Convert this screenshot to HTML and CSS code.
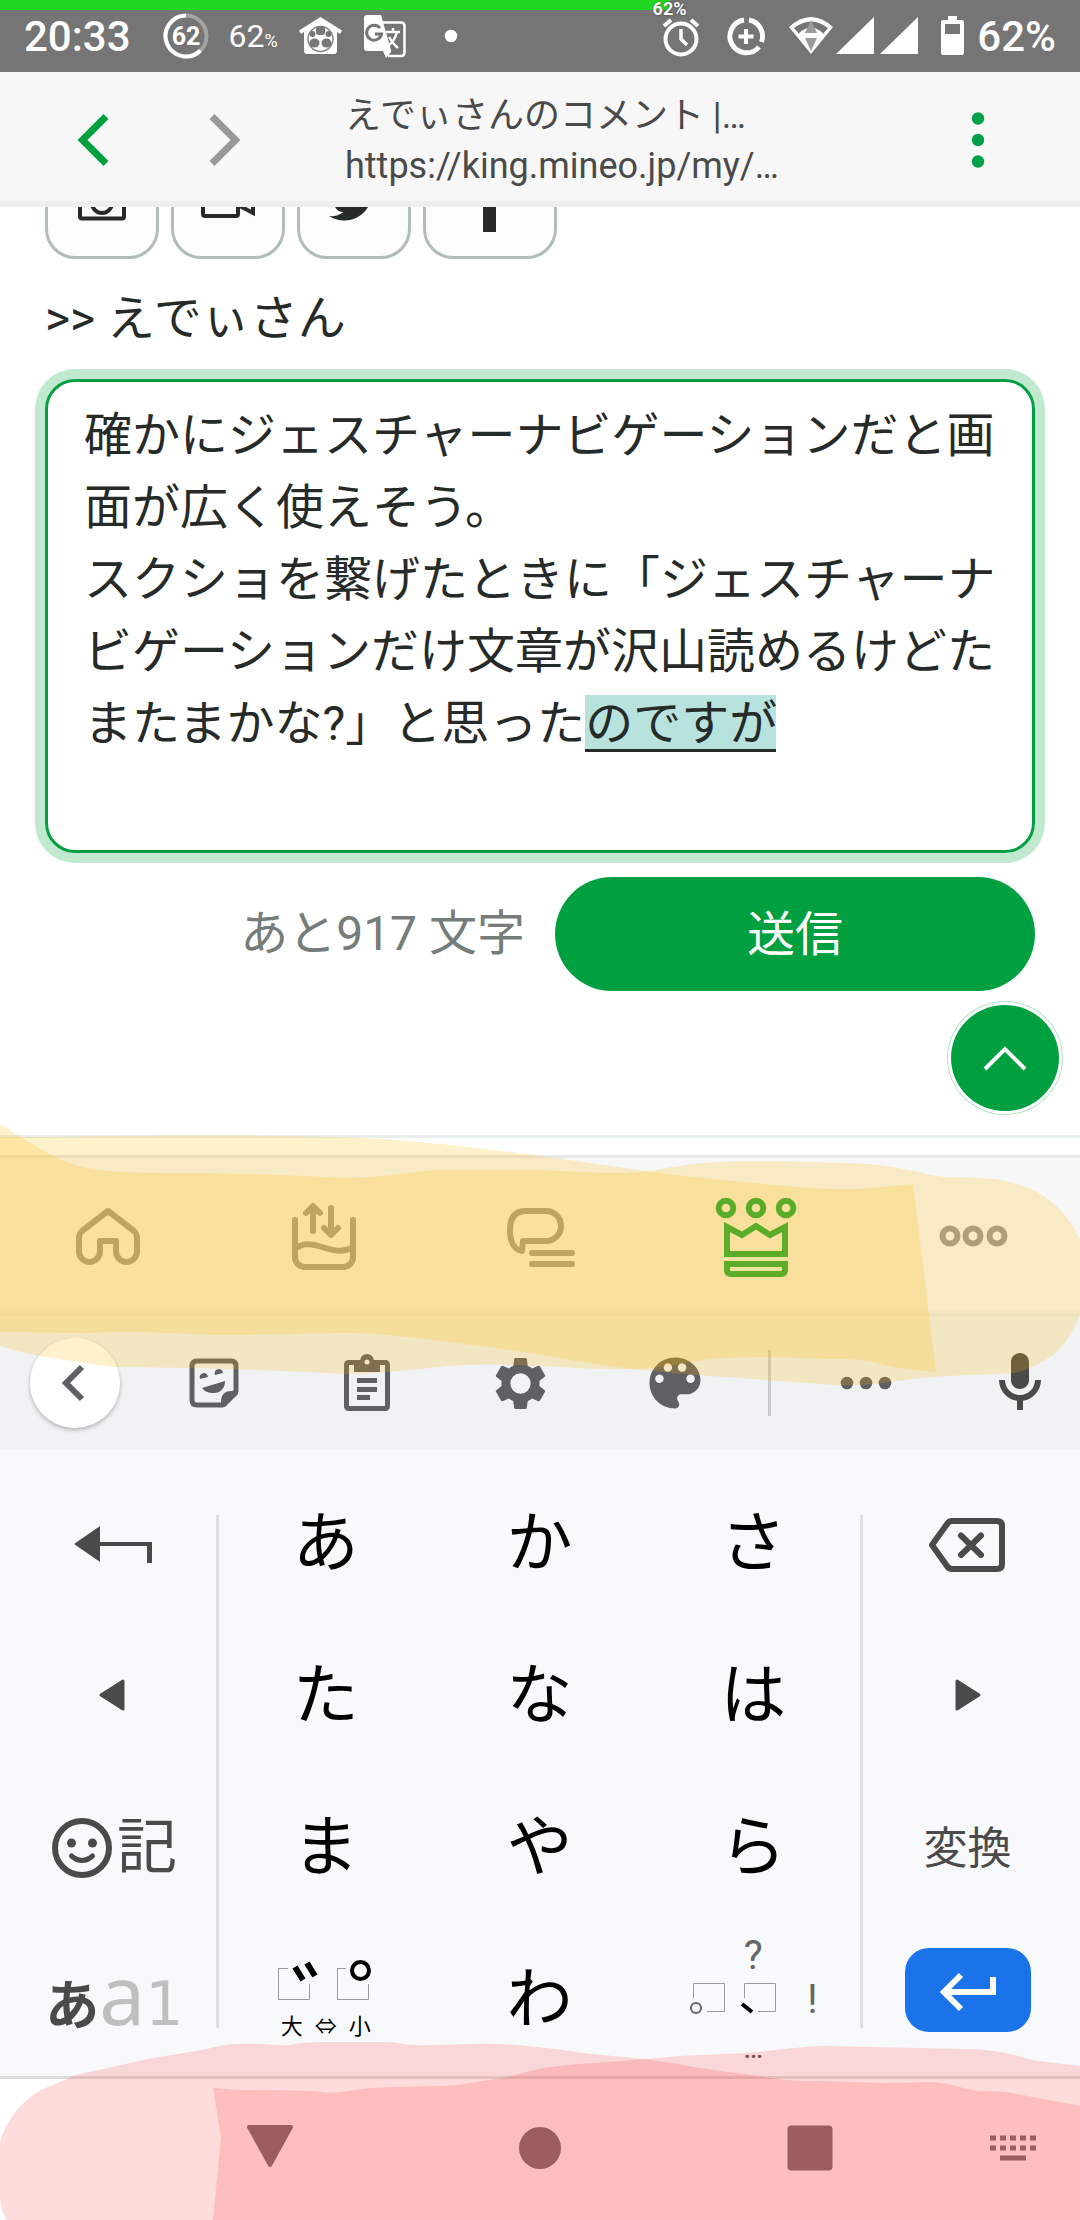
FILE: index.html
```html
<!DOCTYPE html>
<html lang="ja">
<head>
<meta charset="utf-8">
<meta name="viewport" content="width=device-width, initial-scale=1">
<title>えでぃさんのコメント</title>
<link rel="stylesheet" href="styles.css">
</head>
<body>
<header class="status">
  <div class="battery-line" style="width:62%"></div>
  <span class="battery-tag">62%</span>
  <div class="status-group">
    <span class="clock">20:33</span>
    <svg class="ring" width="46" height="46" viewBox="0 0 46 46" fill="none" stroke-width="4"><circle cx="23" cy="23" r="20.500" stroke="#a3a3a3"/><path d="M23 2.500A20.500 20.500 0 1 0 37.500 37.500" stroke="#fff"/><text x="23" y="32" class="ring-text">62</text></svg>
    <span class="narrow">62<small>%</small></span>
    <svg width="45" height="42" viewBox="0 0 45 42"><path d="M22.500 2 44 15.500 42 19 39 17V36Q39 39 36 39H9Q6 39 6 36V17L3 19 1 15.500Z" fill="#fff"/><circle cx="22.500" cy="24" r="12.500" fill="none" stroke="#858585" stroke-width="1.500"/><g fill="#777"><rect x="18" y="11" width="9" height="9" rx="3"/><circle cx="14.500" cy="19" r="3"/><circle cx="30.500" cy="19" r="3"/><ellipse cx="16.500" cy="28" rx="5" ry="4.500"/><ellipse cx="28.500" cy="28" rx="5" ry="4.500"/></g></svg>
    <svg width="45" height="45" viewBox="0 0 45 45"><path d="M18 8.500H38Q41.500 8.500 41.500 12V38Q41.500 42 38 42H25" fill="none" stroke="#fff" stroke-width="2.500"/><path d="M4 1H18L28 36V38L23 44 20 37H4Q1 37 1 34V4Q1 1 4 1Z" fill="#fff"/><path d="M17 14A7.500 7.500 0 1 0 18.500 20H12" fill="none" stroke="#757575" stroke-width="3"/><path d="M23 18H37M30 14V18M34 18Q31 29 24 32M26 23Q30 30 35 34" fill="none" stroke="#fff" stroke-width="2.500"/></svg>
    <svg class="notice-dot" width="14" height="14" viewBox="0 0 14 14"><circle cx="7" cy="7" r="6.200" fill="#fff"/></svg>
  </div>
  <div class="status-group tight">
    <svg width="48" height="48" viewBox="0 0 48 48" fill="none" stroke="#fff" stroke-width="4"><circle cx="24" cy="27" r="15.500"/><path d="M24 17V27L30 33" stroke-width="3.500"/><path d="M7 14 14 8M34 8 41 14"/></svg>
    <svg class="saver" width="48" height="48" viewBox="0 0 48 48" fill="none" stroke="#fff" stroke-width="5"><path d="M22 8A16.500 16.500 0 1 0 37 35"/><path d="M27 8A16.500 16.500 0 0 1 39.500 30"/><path d="M24 17V32M16.500 24.500H31.500" stroke-width="4"/></svg>
    <svg width="48" height="48" viewBox="0 0 48 48"><path d="M2 15Q24-5 46 15L24 42Z" fill="#fff"/><path d="M7 16Q24 3 41 16L36 22Q24 9 12 22Z" fill="#757575"/><path d="M12 21Q24 11 36 21L33 25H15Z" fill="#fff"/><path d="M24 8 30 21H18ZM18 26H30L24 39Z" fill="#9a9a9a"/></svg>
    <svg width="44" height="44" viewBox="0 0 44 44"><path d="M1 40H39V3Z" fill="#fff"/></svg>
    <svg width="44" height="44" viewBox="0 0 44 44"><path d="M1 40H39V3Z" fill="#fff"/></svg>
    <svg class="cell" width="24" height="42" viewBox="0 0 24 42"><path d="M7 1H16V5H21Q23 5 23 7V38Q23 40 21 40H2Q0 40 0 38V7Q0 5 2 5H7Z" fill="#fff"/><path d="M4 9H19V19H4Z" fill="#757575"/></svg>
    <span class="percent">62%</span>
  </div>
</header>

<nav class="browser">
  <button class="plain nav-btn" aria-label="戻る"><svg width="36" height="56" viewBox="0 0 36 56"><path d="M31 4.500 7.500 28 31 51.500" fill="none" stroke="#00a040" stroke-width="7"/></svg></button>
  <button class="plain nav-btn" aria-label="進む"><svg width="36" height="56" viewBox="0 0 36 56"><path d="M5 4.500 28.500 28 5 51.500" fill="none" stroke="#999" stroke-width="7"/></svg></button>
  <div class="address"><span>えでぃさんのコメント |…</span><span>https://king.mineo.jp/my/…</span></div>
  <button class="plain menu-btn" aria-label="メニュー"><svg width="20" height="60" viewBox="0 0 20 60" fill="#00a04a"><circle cx="10" cy="8.500" r="6.200"/><circle cx="10" cy="30" r="6.200"/><circle cx="10" cy="51.500" r="6.200"/></svg></button>
</nav>

<main class="content">
  <div class="share">
    <button class="share-btn" aria-label="写真"><svg width="60" height="60" viewBox="0 0 60 60" fill="none" stroke="#262a28" stroke-width="4"><rect x="8" y="13" width="44" height="33.500" rx="2"/><circle cx="30" cy="31" r="10"/></svg></button>
    <button class="share-btn" aria-label="動画"><svg width="60" height="60" viewBox="0 0 60 60" fill="none" stroke="#262a28" stroke-width="4"><rect x="5" y="13" width="35" height="31" rx="2"/><path d="M40 25 55 16V41L40 33"/></svg></button>
    <button class="share-btn" aria-label="Twitter"><svg width="60" height="60" viewBox="0 0 60 60"><path transform="translate(5 5) scale(2)" fill="#262a28" d="M23.953 4.570a10 10 0 01-2.825.775 4.958 4.958 0 002.163-2.723c-.951.555-2.005.959-3.127 1.184a4.920 4.920 0 00-8.384 4.482C7.690 8.095 4.067 6.130 1.640 3.162a4.822 4.822 0 00-.666 2.475c0 1.710.870 3.213 2.188 4.096a4.904 4.904 0 01-2.228-.616v.060a4.923 4.923 0 003.946 4.827 4.996 4.996 0 01-2.212.085 4.936 4.936 0 004.604 3.417 9.867 9.867 0 01-6.102 2.105c-.390 0-.779-.023-1.170-.067a13.995 13.995 0 007.557 2.209c9.053 0 13.998-7.496 13.998-13.985 0-.210 0-.420-.015-.630A9.935 9.935 0 0024 4.590z"/></svg></button>
    <button class="share-btn wide" aria-label="Facebook"><svg width="60" height="60" viewBox="0 0 60 60"><path d="M23 60V33H15V22H23V14Q23 2 36 2H44V13H39Q36 13 36 17V22H44L43 33H36V60Z" fill="#262a28"/></svg></button>
  </div>
  <label class="reply-to" for="comment">&gt;&gt; えでぃさん</label>
  <div class="editor">
    <span class="composing"></span>
    <textarea id="comment" class="comment" rows="6" spellcheck="false">確かにジェスチャーナビゲーションだと画面が広く使えそう。
スクショを繋げたときに「ジェスチャーナビゲーションだけ文章が沢山読めるけどたまたまかな?」と思ったのですが</textarea>
  </div>
  <div class="submit-row">
    <span class="remaining">あと917 文字</span>
    <button class="send">送信</button>
  </div>
  <a class="to-top" href="#" aria-label="ページの先頭へ"><svg width="50" height="32" viewBox="0 0 50 32"><path d="M5 27 25 7 45 27" fill="none" stroke="#fff" stroke-width="4"/></svg></a>
</main>

<div class="lower">
  <nav class="tabs">
    <a href="#" aria-label="ホーム"><svg width="72" height="72" viewBox="0 0 72 72"><path d="M36 11 10 31Q7 34 7 37V51A10.500 11 0 0 0 28 51V41H44V51A10.500 11 0 0 0 65 51V37Q65 34 62 31Z"/></svg></a>
    <a href="#" aria-label="パケット"><svg width="72" height="72" viewBox="0 0 72 72"><path d="M7 20V57A10 10 0 0 0 17 67H55A10 10 0 0 0 65 57V20M7 49C14 43 22 43 34 47S55 53 65 47M25 31V7M18 13 25 6 32 13M43 8V33M36 28 43 35 50 28"/></svg></a>
    <a href="#" aria-label="掲示板"><svg width="72" height="72" viewBox="0 0 72 72"><path d="M19 41H42A15 15 0 0 0 42 11H22Q6 11 6 30C6 43 11 50 18 51Z M28 53H68M28 64H68"/></svg></a>
    <a href="#" class="active" aria-label="マイネ王"><svg width="84" height="84" viewBox="0 0 84 84"><circle cx="12" cy="14" r="7.300"/><circle cx="42" cy="14" r="7.300"/><circle cx="72" cy="14" r="7.300"/><path class="sharp" d="M13 33 28 41 42 32 56 41 71 33V60H13Z"/><path class="sharp" d="M13 70H71V76Q71 80 67 80H17Q13 80 13 76Z"/></svg></a>
    <a href="#" aria-label="その他"><svg width="72" height="72" viewBox="0 0 72 72"><circle cx="14" cy="36" r="7.500"/><circle cx="37" cy="36" r="7.500"/><circle cx="61" cy="36" r="7.500"/></svg></a>
  </nav>

  <div class="tools">
    <button class="plain" aria-label="閉じる"><span class="disc"><svg width="40" height="40" viewBox="0 0 40 40"><path d="M27 4 11 20 27 36" fill="none" stroke="#5f6063" stroke-width="6"/></svg></span></button>
    <button class="plain" aria-label="ステッカー"><svg width="60" height="60" viewBox="0 0 60 60"><path d="M13 8H47Q52 8 52 13V38L38 52H13Q8 52 8 47V13Q8 8 13 8Z" fill="none" stroke="#5f6063" stroke-width="5"/><path d="M54 37V41L41 54H37V47Q38 38 47 38H54Z" fill="#5f6063"/><path d="M16 26A4.200 4.200 0 1 1 24 24ZM31 22A4.200 4.200 0 1 1 39 20ZM18 35 41 28C41 36 36 40 30 40 24 40 20 38 18 35Z" fill="#5f6063"/></svg></button>
    <button class="plain" aria-label="クリップボード"><svg width="60" height="60" viewBox="0 0 60 60"><path fill="none" stroke="#5f6063" stroke-width="5" d="M12 9.500H48Q50.500 9.500 50.500 12V53Q50.500 55.500 48 55.500H12Q9.500 55.500 9.500 53V12Q9.500 9.500 12 9.500Z"/><path fill="#5f6063" d="M17 8H23A7 7 0 0 1 37 8H43V19H17ZM20 25H40V30H20ZM20 34H40V39H20ZM20 42H33V47H20Z"/><circle cx="30" cy="9" r="2.500" fill="#f1f2f4"/></svg></button>
    <button class="plain" aria-label="設定"><svg width="61" height="61" viewBox="0 0 24 24"><path fill="#5f6063" d="M19.430 12.980c.040-.320.070-.640.070-.980s-.030-.660-.070-.980l2.110-1.650c.190-.150.240-.420.120-.640l-2-3.460c-.120-.220-.390-.300-.610-.220l-2.490 1c-.520-.400-1.080-.730-1.690-.980l-.380-2.650C14.460 2.180 14.250 2 14 2h-4c-.250 0-.460.180-.490.420l-.380 2.650c-.610.250-1.170.590-1.690.980l-2.490-1c-.230-.090-.490 0-.610.220l-2 3.460c-.130.220-.070.490.120.640l2.110 1.650c-.040.320-.070.650-.070.980s.030.660.070.980l-2.110 1.650c-.190.150-.240.420-.120.640l2 3.460c.120.220.390.300.610.220l2.490-1c.520.400 1.080.730 1.690.980l.380 2.650c.030.240.240.420.490.420h4c.250 0 .460-.180.490-.420l.380-2.650c.610-.250 1.170-.590 1.690-.980l2.490 1c.230.090.490 0 .610-.220l2-3.460c.120-.220.070-.490-.120-.640l-2.110-1.650zM12 16a4 4 0 1 1 0-8 4 4 0 0 1 0 8z"/></svg></button>
    <button class="plain" aria-label="テーマ"><svg width="68" height="68" viewBox="0 0 24 24"><path fill="#5f6063" d="M12 3c-4.970 0-9 4.030-9 9s4.030 9 9 9c.830 0 1.500-.670 1.500-1.500 0-.390-.150-.740-.390-1.010-.230-.260-.380-.610-.380-.990 0-.830.670-1.500 1.500-1.500H16c2.760 0 5-2.240 5-5 0-4.420-4.030-8-9-8zm-5.500 9c-.830 0-1.500-.670-1.500-1.500S5.670 9 6.500 9 8 9.670 8 10.500 7.330 12 6.500 12zm3-4C8.670 8 8 7.330 8 6.500S8.670 5 9.500 5s1.500.670 1.500 1.500S10.330 8 9.500 8zm5 0c-.830 0-1.500-.670-1.500-1.500S13.670 5 14.500 5s1.500.670 1.500 1.500S15.330 8 14.500 8zm3 4c-.830 0-1.500-.670-1.500-1.500S16.670 9 17.500 9s1.500.670 1.500 1.500-.670 1.500-1.500 1.500z"/></svg></button>
    <span class="tool-divider"></span>
    <button class="plain" aria-label="その他"><svg width="52" height="14" viewBox="0 0 52 14" fill="#5f6063"><circle cx="7" cy="7" r="6.300"/><circle cx="26" cy="7" r="6.300"/><circle cx="45" cy="7" r="6.300"/></svg></button>
    <button class="plain" aria-label="音声入力"><svg width="72" height="72" viewBox="0 0 24 24"><path fill="#4a4a4a" d="M12 14c1.660 0 3-1.340 3-3V5c0-1.660-1.340-3-3-3S9 3.340 9 5v6c0 1.660 1.340 3 3 3zM17 11c0 2.760-2.240 5-5 5s-5-2.240-5-5H5c0 3.530 2.610 6.430 6 6.920V21h2v-3.080c3.390-.490 6-3.390 6-6.920h-2z"/></svg></button>
  </div>

  <svg class="marker marker-yellow" viewBox="0 0 1080 300" preserveAspectRatio="none" aria-hidden="true">
    <path d="M0 27H45C180 25 280 25 362 28 420 31 480 38 540 46 600 54 660 64 722 70 780 75 830 82 870 78L913 74 936 262C920 261 900 259 880 254 860 249 850 249 830 249L767 247 720 248C690 251 670 257 640 259 600 260 560 257 540 256 500 254 460 254 440 257 400 261 370 264 344 264 290 261 230 259 190 258L114 257C70 251 30 246 0 236Z"/>
    <path d="M0 14C30 33 50 46 69 53 95 62 120 62 160 63 230 63 290 65 340 68 390 68 410 61 440 60L540 60C580 62 610 64 640 62 670 58 690 53 720 52 770 50 830 53 868 54 900 56 920 64 945 67 965 68 980 67 1001 70 1040 78 1065 95 1082 134V200C1070 230 1060 240 1053 245 1040 253 1030 260 1015 263 980 265 950 265 920 268 890 272 860 277 833 275 780 271 740 268 695 265 650 261 620 258 602 255L540 245C500 238 480 236 448 232 400 226 370 222 334 223 290 224 250 225 214 225 180 223 140 222 120 222L79 223 0 222Z"/>
  </svg>
</div>

<section class="keyboard">
  <button class="key side" aria-label="戻す"><svg width="80" height="44" viewBox="0 0 80 44" fill="#4a4a4a"><path d="M2 22 28 4V40Z"/><path d="M27 20H80V41H75V24H27Z"/></svg></button>
  <span class="rule"></span>
  <button class="key">あ</button><button class="key">か</button><button class="key">さ</button>
  <span class="rule"></span>
  <button class="key side" aria-label="削除"><svg width="78" height="60" viewBox="0 0 78 60" fill="none" stroke="#4a4a4a"><path d="M23 7H68Q73 7 73 12V50Q73 55 68 55H23Q20 55 18 52L3 31 18 10Q20 7 23 7Z" stroke-width="6"/><path d="M32 21.500 52 41M52 21.500 32 41" stroke-width="6" stroke-linecap="round"/></svg></button>

  <button class="key side" aria-label="左へ"><svg width="30" height="36" viewBox="0 0 30 36"><path d="M4 17 26 3V31Z" fill="#4a4a4a" stroke="#4a4a4a" stroke-width="3" stroke-linejoin="round"/></svg></button>
  <button class="key">た</button><button class="key">な</button><button class="key">は</button>
  <button class="key side" aria-label="右へ"><svg width="30" height="36" viewBox="0 0 30 36"><path d="M26 17 4 3V31Z" fill="#4a4a4a" stroke="#4a4a4a" stroke-width="3" stroke-linejoin="round"/></svg></button>

  <button class="key side emoji"><svg width="60" height="60" viewBox="0 0 60 60"><circle cx="30" cy="30" r="27" fill="none" stroke="#4a4a4a" stroke-width="6"/><circle cx="19.500" cy="25" r="4.500" fill="#4a4a4a"/><circle cx="40.500" cy="25" r="4.500" fill="#4a4a4a"/><path d="M19.500 38Q30 47 40.500 38" fill="none" stroke="#4a4a4a" stroke-width="5" stroke-linecap="round"/></svg>記</button>
  <button class="key">ま</button><button class="key">や</button><button class="key">ら</button>
  <button class="key side convert">変換</button>

  <button class="key side mode"><span><b>あ</b><span class="latin">a</span><span class="latin digit">1</span></span></button>
  <button class="key marks" aria-label="濁点・半濁点・大小"><svg width="100" height="46" viewBox="0 0 100 46" fill="none"><path d="M12 11.500H2.500V42.500H33.500V27M70 11.500H61.500V42.500H92.500V27" stroke="#999"/><path d="M19 10 27 23M31 6 39 19" stroke="#000" stroke-width="6"/><circle cx="84.500" cy="13.500" r="8.500" stroke="#000" stroke-width="4"/></svg><span class="sizes"><span>大</span><span>⇔</span><span>小</span></span></button>
  <button class="key">わ</button>
  <button class="key punct"><span>?</span><span class="punct-row"><svg width="88" height="44" viewBox="0 0 88 44" fill="none"><path d="M4.500 20V5.500H35.500V33.500H18M55.500 20V5.500H86.500V33.500H69" stroke="#999"/><circle cx="7" cy="30" r="5" stroke="#666" stroke-width="2"/><path d="M53 26 63 34" stroke="#000" stroke-width="4"/></svg><span>!</span></span><span class="ellipsis">…</span></button>
  <button class="key side" aria-label="改行"><span class="enter"><svg width="60" height="42" viewBox="0 0 60 42" fill="none" stroke="#fff" stroke-width="6"><path d="M23 6 6 23 23 40M6 23H55V8"/></svg></span></button>
</section>

<footer class="system">
  <button class="plain sys-back" aria-label="戻る"><svg width="50" height="46" viewBox="0 0 50 46"><path d="M4 2H46L25 40Z" fill="#757575" stroke="#757575" stroke-width="4" stroke-linejoin="round"/></svg></button>
  <button class="plain" aria-label="ホーム"><svg width="42" height="42" viewBox="0 0 42 42"><circle cx="21" cy="21" r="21" fill="#757575"/></svg></button>
  <button class="plain" aria-label="履歴"><svg width="46" height="46" viewBox="0 0 46 46"><rect x="0.500" y="0.500" width="45" height="45" rx="4" fill="#757575"/></svg></button>
  <button class="plain" aria-label="キーボード切替"><svg width="46" height="26" viewBox="0 0 46 26"><path d="M0 3H46M0 13H46" stroke="#757575" stroke-width="5" stroke-dasharray="6 4"/><path d="M10 23H36" stroke="#757575" stroke-width="5"/></svg></button>
  <svg class="marker marker-red" viewBox="0 0 1080 200" preserveAspectRatio="none" aria-hidden="true">
    <path d="M7 200Q0 190 0 175V123C5 102 20 82 41 70L76 55 148 39 207 29Q225 24 241 24C260 23 275 26 289 25Q305 22 324 22H386C400 22 403 25 413 25 440 26 465 23 496 24 530 25 560 30 592 34L644 39C680 44 715 51 751 55 775 59 790 61 813 61L890 63 930 62C955 63 965 71 985 71Q1000 71 1012 73L1080 86V200Z"/>
    <path d="M213 68C225 69 235 70 255 70 285 70 305 70 331 73 350 71 370 67 393 67L441 66C460 65 475 62 496 59 515 56 530 50 551 47 580 43 615 42 647 39 680 35 710 35 744 33 775 31 800 26 826 26L964 29Q985 29 1005 33C1025 37 1030 41 1047 42L1080 46V200H213L221 117Z"/>
  </svg>
</footer>
</body>
</html>
```
FILE: styles.css
```css
* { box-sizing: border-box; }

body {
  margin: 0;
  background: #fff;
  color: #262a28;
  font-family: Roboto, "Noto Sans CJK JP", sans-serif;
  overflow-x: hidden;
}

svg { display: block; flex: none; }

button, textarea { font-family: inherit; color: inherit; margin: 0; }

button { cursor: pointer; border: 0; }

.plain {
  display: flex;
  align-items: center;
  justify-content: center;
  padding: 0;
  background: none;
}

/* Status bar */
.status {
  position: relative;
  display: flex;
  justify-content: space-between;
  height: 72px;
  padding: 0 24px;
  background: #757575;
  color: #fff;
}

.battery-line {
  position: absolute;
  top: 0;
  left: 0;
  height: 10px;
  background: #22d722;
}

.battery-tag {
  position: absolute;
  top: 0;
  left: 62%;
  transform: translateX(-50%);
  font-size: 18px;
  line-height: 18px;
  font-weight: 700;
  text-shadow: 0 0 2px #333;
}

.status-group { display: flex; align-items: center; gap: 20px; }
.status-group.tight { gap: 0; }
.clock { font-size: 42px; font-weight: 500; margin-right: 12px; }
.percent { font-size: 42px; font-weight: 500; }
.ring-text { font-size: 25px; font-weight: 700; fill: #fff; stroke: none; text-anchor: middle; }
.narrow { font-family: "Liberation Sans Narrow", Roboto, sans-serif; font-size: 32px; }
.narrow small { font-size: 18px; }
.notice-dot { margin-left: 16px; }
.saver { margin: 0 17px; }
.cell { margin: 0 12px 0 18px; }

/* Browser bar */
.browser {
  display: flex;
  align-items: center;
  height: 135px;
  padding: 6px 36px 0 27px;
  background: #f7f7f7;
  border-bottom: 6px solid #eee;
}

.nav-btn { width: 132px; height: 120px; }

.address {
  flex: 1;
  display: flex;
  flex-direction: column;
  padding: 2px 0 0 54px;
  font-size: 36px;
  line-height: 50px;
  color: #4a4a4a;
  white-space: nowrap;
}

.menu-btn { width: 132px; height: 120px; }

/* Page content */
.content {
  position: relative;
  padding: 0 45px 144px;
  overflow: hidden;
  border-bottom: 3px solid #e8eeec;
}

.share { display: flex; gap: 12px; margin-top: -62px; }

.share-btn {
  display: flex;
  align-items: center;
  justify-content: center;
  width: 114px;
  height: 114px;
  padding: 0;
  border: 3px solid #b2bdb9;
  border-radius: 30px;
  background: #fcfcfc;
}

.share-btn.wide { width: 134px; }

.reply-to { display: block; margin: 24px 0; font-size: 48px; line-height: 72px; }

.editor {
  position: relative;
  border-radius: 30px;
  box-shadow: 0 0 0 10px #c1e9d0;
}

.composing {
  position: absolute;
  left: 540px;
  top: 316px;
  width: 191px;
  height: 57px;
  background: #b8e2dd;
  border-bottom: 3px solid #262a28;
}

.comment {
  position: relative;
  display: block;
  width: 100%;
  height: 474px;
  padding: 18px 30px 18px 36px;
  border: 3px solid #00a040;
  border-radius: 30px;
  background: none;
  font-size: 48px;
  line-height: 72px;
  resize: none;
  overflow: hidden;
  outline: 0;
}

.submit-row {
  display: flex;
  align-items: center;
  justify-content: flex-end;
  gap: 30px;
  margin-top: 24px;
}

.remaining { font-size: 48px; line-height: 72px; color: #757c79; }

.send {
  width: 480px;
  height: 114px;
  padding: 0 0 8px;
  border-radius: 57px;
  background: #00a040;
  color: #fff;
  font-size: 48px;
}

.to-top {
  position: absolute;
  right: 21px;
  bottom: 24px;
  display: flex;
  align-items: center;
  justify-content: center;
  width: 108px;
  height: 106px;
  border-radius: 50%;
  background: #00a040;
  box-shadow: 0 0 0 3px #fff, 0 0 0 4px #b5e3c6;
}

/* App tabs and keyboard tools share one highlighted area */
.lower { position: relative; padding-top: 17px; }

.tabs {
  display: grid;
  grid-template-columns: repeat(5, 1fr);
  height: 161px;
  padding-bottom: 2px;
  border-top: 3px solid #e8e8e8;
  background: linear-gradient(#f7f7f7 150px, #ebebeb);
}

.tabs a { display: flex; align-items: center; justify-content: center; }

.tabs svg {
  fill: none;
  stroke: #999;
  stroke-width: 6;
  stroke-linecap: round;
  stroke-linejoin: round;
}

.tabs .active svg { stroke: #00a640; }
.tabs .sharp { stroke-linejoin: miter; stroke-linecap: butt; }

.tools {
  display: grid;
  grid-template-columns: 150fr 128fr 178fr 128fr 182fr 6fr 188fr 120fr;
  align-items: center;
  height: 134px;
  background: #f1f2f4;
}

.disc {
  display: flex;
  align-items: center;
  justify-content: center;
  width: 90px;
  height: 90px;
  border-radius: 50%;
  background: #fff;
  box-shadow: 0 2px 4px #0004;
}

.tool-divider { justify-self: center; width: 3px; height: 66px; background: #ccc; }

.marker { position: absolute; left: 0; width: 100%; pointer-events: none; }
.marker-yellow { top: -28px; height: 300px; fill: rgba(255, 185, 0, 0.2); }
.marker-red { bottom: 0; height: 200px; fill: rgba(255, 35, 35, 0.16); }

/* Kana keyboard */
.keyboard {
  display: grid;
  grid-template-columns: 208fr 3px repeat(3, 214fr) 3px 209fr;
  grid-auto-rows: 152px;
  padding: 16px 8px 2px;
  background: #f8f9fb;
}

.rule { grid-row: 1 / 5; margin: 49px 0 46px; background: #dfe0e0; }
.rule:nth-of-type(1) { grid-column: 2; }
.rule:nth-of-type(2) { grid-column: 6; }

.key {
  display: flex;
  align-items: center;
  justify-content: center;
  padding: 4px 0 0;
  background: none;
  color: #000;
  font-size: 66px;
  line-height: 96px;
}

.key.side { color: #4a4a4a; }
.key.emoji { gap: 5px; padding-left: 5px; font-size: 60px; }
.key.convert { padding-top: 6px; font-size: 44px; }
.key.mode { padding-left: 5px; font-size: 54px; line-height: 80px; }
.latin { color: #bfbfbf; font-family: "Noto Sans", sans-serif; font-size: 82px; }
.latin.digit { font-family: "DejaVu Sans", sans-serif; font-size: 60px; }

.key.marks { flex-direction: column; font-size: 22px; line-height: 32px; gap: 8px; }
.sizes { display: flex; gap: 12px; }

.key.punct { flex-direction: column; padding: 0; font-size: 40px; line-height: 44px; color: #666; }
.punct-row { display: flex; align-items: center; gap: 30px; }
.ellipsis { margin: 6px 0 -6px; font-size: 30px; line-height: 40px; color: #555; }

.enter {
  display: flex;
  align-items: center;
  justify-content: center;
  width: 126px;
  height: 84px;
  margin-bottom: 20px;
  border-radius: 24px;
  background: #1a73e8;
}

/* System navigation */
.system {
  position: relative;
  display: grid;
  grid-template-columns: 270fr 270fr 270fr 135fr;
  height: 144px;
  padding: 0 0 4px 12.5%;
  border-top: 3px solid #dedede;
}
```
